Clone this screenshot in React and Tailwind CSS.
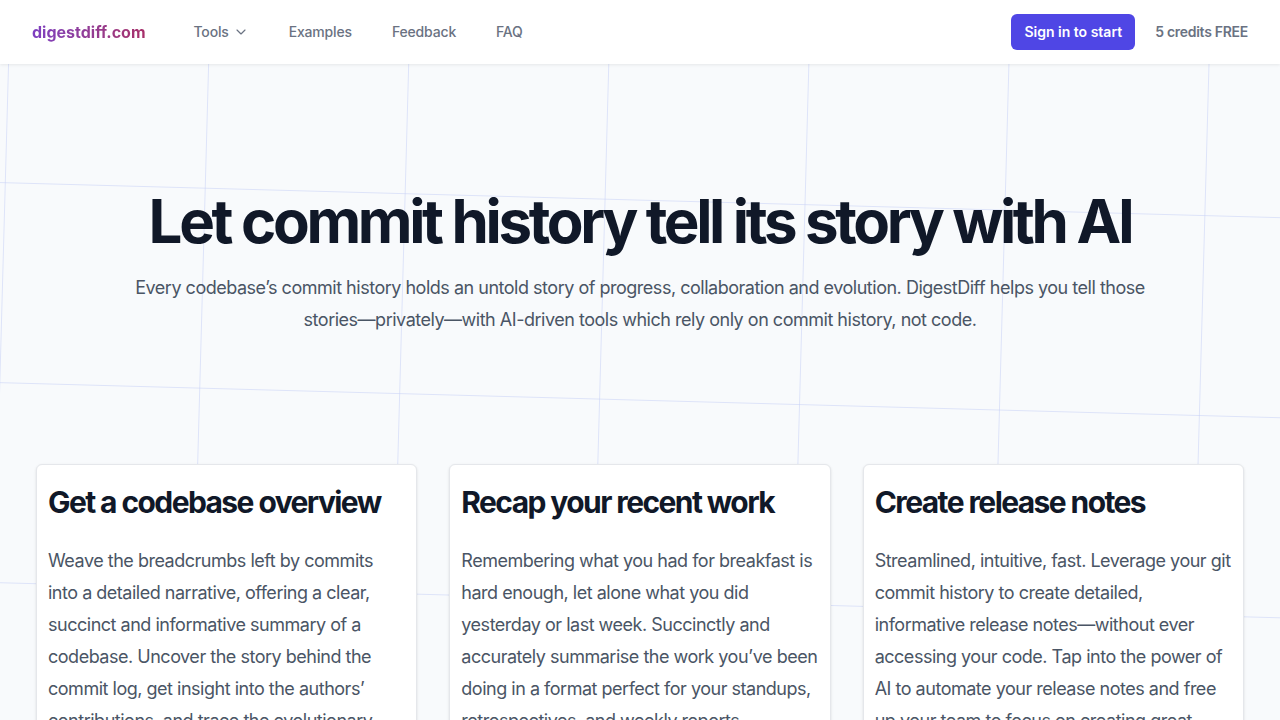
import React from 'react';
import { ChevronDown } from 'lucide-react';

const CARDS = [
  {
    title: 'Get a codebase overview',
    body: 'Weave the breadcrumbs left by commits into a detailed narrative, offering a clear, succinct and informative summary of a codebase. Uncover the story behind the commit log, get insight into the authors’ contributions, and trace the evolutionary path of the project.',
  },
  {
    title: 'Recap your recent work',
    body: 'Remembering what you had for breakfast is hard enough, let alone what you did yesterday or last week. Succinctly and accurately summarise the work you’ve been doing in a format perfect for your standups, retrospectives, and weekly reports.',
  },
  {
    title: 'Create release notes',
    body: 'Streamlined, intuitive, fast. Leverage your git commit history to create detailed, informative release notes—without ever accessing your code. Tap into the power of AI to automate your release notes and free up your team to focus on creating great software.',
  },
];

// faint tilted grid behind the hero
function GridBackdrop() {
  return (
    <svg className="absolute inset-0 w-full h-full pointer-events-none" aria-hidden="true">
      <defs>
        <pattern
          id="grid"
          width="200"
          height="200"
          patternUnits="userSpaceOnUse"
          patternTransform="rotate(1.57) translate(9.8 -18)"
        >
          <path d="M0 0 V200 M0 0 H200" fill="none" stroke="#c4cdf5" strokeWidth="1" />
        </pattern>
      </defs>
      <rect width="100%" height="100%" fill="url(#grid)" />
    </svg>
  );
}

export default function App() {
  return (
    <div className="relative min-h-screen overflow-hidden bg-[#f8fafc] font-['Inter',sans-serif]">
      <GridBackdrop />

      <header className="relative z-10 h-16 bg-white shadow-[0_1px_3px_rgba(0,0,0,0.08)] flex items-center justify-between px-8">
        <div className="flex items-center">
          <span className="text-base font-bold bg-gradient-to-r from-[#7e3fc1] to-[#a72f69] bg-clip-text text-transparent">
            digestdiff.com
          </span>
          <nav className="ml-12 flex items-center gap-10 text-sm font-medium tracking-[-0.012em] text-gray-500">
            <span className="flex items-center gap-1">
              Tools <ChevronDown size={16} strokeWidth={1.75} />
            </span>
            <span>Examples</span>
            <span>Feedback</span>
            <span>FAQ</span>
          </nav>
        </div>
        <div className="flex items-center gap-5">
          <button className="h-9 px-[13px] rounded-md bg-[#4f46e5] text-white text-sm font-semibold">
            Sign in to start
          </button>
          <span className="text-sm font-semibold tracking-[-0.02em] text-gray-500">5 credits FREE</span>
        </div>
      </header>

      <main className="relative z-0">
        <section className="pt-[127px] text-center">
          <h1 className="text-6xl leading-[60px] font-bold tracking-[-0.056em] text-gray-900">
            Let commit history tell its story with AI
          </h1>
          <p className="mx-auto mt-[21px] max-w-[1024px] text-lg leading-8 tracking-[-0.027em] text-gray-600">
            Every codebase’s commit history holds an untold story of progress, collaboration and evolution. DigestDiff helps you tell those stories—privately—with AI-driven tools which rely only on commit history, not code.
          </p>
        </section>

        <section className="mt-32 px-9 pb-16 grid grid-cols-3 gap-8">
          {CARDS.map((c) => (
            <div key={c.title} className="rounded-md border border-gray-200 bg-white px-[11px] pt-[19px] pb-6 shadow-sm">
              <h2 className="text-3xl leading-9 font-bold tracking-[-0.053em] text-gray-900">{c.title}</h2>
              <p className="mt-[25px] text-lg leading-8 tracking-[-0.027em] text-gray-600">{c.body}</p>
            </div>
          ))}
        </section>
      </main>
    </div>
  );
}
